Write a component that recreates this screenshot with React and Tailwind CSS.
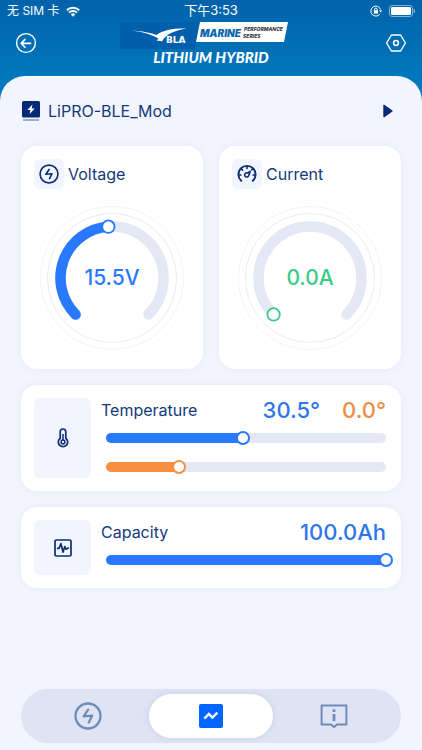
import React, { useState } from "react";

const BoltCircleIcon = ({ className }) => (
  <svg viewBox="0 0 28 28" className={className} fill="none" stroke="currentColor" strokeWidth="2.3" strokeLinecap="round" strokeLinejoin="round">
    <circle cx="14" cy="14" r="12.5" />
    <path d="M14.2 7.6 L9.6 14.4 L18.2 13.6 L14.8 20.4" />
  </svg>
);

const MeterIcon = ({ className }) => (
  <svg viewBox="0 0 20 20" className={className} fill="none" stroke="currentColor" strokeWidth="1.9" strokeLinecap="round" strokeLinejoin="round">
    <path d="M4.2 16.8 A8.6 8.6 0 1 1 15.8 16.8" />
    <path d="M10 2.4 V4.6 M4.2 4.6 L5.6 6.2 M15.8 4.6 L14.6 6 M1.8 11 H4 M16 11 H18.2" strokeWidth="1.6" />
    <path d="M13.2 7.4 L10.6 9 A2.1 2.1 0 1 0 11.8 11.4 Z" strokeWidth="1.6" />
  </svg>
);

const ThermometerIcon = ({ className }) => (
  <svg viewBox="0 0 12 20" className={className} fill="none" stroke="currentColor" strokeWidth="1.7" strokeLinecap="round">
    <path d="M3.2 10.2 V3.8 A2.8 2.8 0 0 1 8.8 3.8 V10.2 A4.7 4.7 0 1 1 3.2 10.2 Z" />
    <path d="M6 6.4 V12" strokeWidth="1.5" />
    <circle cx="6" cy="14" r="1.9" strokeWidth="1.5" />
  </svg>
);

const PulseIcon = ({ className }) => (
  <svg viewBox="0 0 18 18" className={className} fill="none" stroke="currentColor" strokeWidth="1.7" strokeLinecap="round" strokeLinejoin="round">
    <rect x="1" y="1" width="16" height="16" rx="1.2" />
    <path d="M3.6 9.4 H5 L7 4.6 L9 13.2 L10.8 7.6 L12 10.2 L14.4 9" />
  </svg>
);

const BackIcon = ({ className }) => (
  <svg viewBox="0 0 22 22" className={className} fill="none" stroke="currentColor" strokeWidth="1.4" strokeLinecap="round" strokeLinejoin="round">
    <circle cx="11" cy="11" r="9.4" />
    <path d="M15.6 11.4 H6.6 M10 7.4 L6.2 11.4 L10 15.2" strokeWidth="1.6" />
  </svg>
);

const SettingsIcon = ({ className }) => (
  <svg viewBox="0 0 22 22" className={className} fill="none" stroke="currentColor" strokeWidth="1.4" strokeLinejoin="round">
    <path d="M6.4 3 H15.6 L20.4 11 L15.6 19 H6.4 L1.6 11 Z" />
    <circle cx="11" cy="11" r="2.4" strokeWidth="1.5" />
  </svg>
);

const ModuleIcon = ({ className }) => (
  <svg viewBox="0 0 18 20" className={className}>
    <rect width="18" height="16.6" rx="1.6" fill="#062a78" />
    <path d="M10.4 3.4 L5.4 9 H8.4 L7.6 13 L12.8 7.4 H9.8 Z" fill="#fff" />
    <path d="M1 19 H17" stroke="#8496bd" strokeWidth="1.5" />
  </svg>
);

const InfoIcon = ({ className }) => (
  <svg viewBox="0 0 28 24" className={className} fill="none" stroke="currentColor" strokeWidth="2">
    <path d="M1.6 1.4 H26.4 V20.4 H17 L14 23 L11 20.4 H1.6 Z" strokeLinejoin="round" />
    <path d="M14 10 V17" strokeWidth="2.8" />
    <path d="M14 5.4 V8" strokeWidth="2.8" />
  </svg>
);

const TrendIcon = ({ className }) => (
  <svg viewBox="0 0 24 24" className={className}>
    <rect width="24" height="24" rx="2" fill="#0066ff" />
    <path d="M5.4 14.6 L9.8 10 L13.4 13.6 L18.4 8.6" fill="none" stroke="#fff" strokeWidth="2.4" />
  </svg>
);

const BrandLogo = () => (
  <svg viewBox="0 0 182 27" className="block h-[27px] w-[182px]" role="img" aria-label="BLA Marine Performance Series">
    <path d="M0 0 H81 L75 27 H0 Z" fill="#005faa" />
    <path d="M11 8.4 C22 9 31 10.6 36.6 13 C43 8.2 52 6.4 67 6.6 C55 8.4 46 12 42 19.6 C40 18.8 38.4 18.6 36.4 19.2 L38.4 16.8 C33 12.4 22 9.8 11 8.4 Z" fill="#fff" />
    <text x="46" y="21" fontSize="9" fontWeight="700" fontFamily="'DejaVu Sans', sans-serif" fill="#fff">BLA</text>
    <path d="M80 0 H168 L164 20 H76 Z" fill="#fff" />
    <text x="80" y="15" fontSize="10" fontWeight="900" fontStyle="italic" fontFamily="Inter, sans-serif" fill="#0768ae">MARINE</text>
    <text x="124" y="9" fontSize="5" fontWeight="800" fontStyle="italic" fontFamily="Inter, sans-serif" fill="#33383f">PERFORMANCE</text>
    <text x="123" y="16" fontSize="5" fontWeight="800" fontStyle="italic" fontFamily="Inter, sans-serif" fill="#33383f">SERIES</text>
  </svg>
);

const StatusBar = () => (
  <div className="grid h-[22px] grid-cols-3 items-center px-[7px] text-xs text-white">
    <div className="flex items-center gap-1.5">
      <span>无 SIM 卡</span>
      <svg viewBox="0 0 14 11" className="h-[11px] w-3.5" fill="none" stroke="#fff" strokeWidth="2">
        <path d="M0.8 4.2 A8.8 8.8 0 0 1 13.2 4.2" />
        <path d="M3 6.6 A5.7 5.7 0 0 1 11 6.6" />
        <path d="M4.8 8.4 A3.1 3.1 0 0 1 9.2 8.4 L7 10.8 Z" fill="#fff" stroke="none" />
      </svg>
    </div>
    <span className="text-center text-[13px]">下午3:53</span>
    <div className="flex items-center justify-end gap-[7px]">
      <svg viewBox="0 0 12 12" className="size-3" fill="none" stroke="#fff">
        <path d="M10.6 4.4 A5 5 0 1 0 9.8 9.2" />
        <path d="M9 5.2 H12 L10.8 7.4 Z" fill="#fff" stroke="none" />
        <rect x="3.8" y="5.2" width="4.2" height="3.4" fill="#fff" stroke="none" />
        <path d="M4.6 5.4 V4.4 A1.3 1.3 0 0 1 7.2 4.4 V5.4" />
      </svg>
      <svg viewBox="0 0 26 12" className="h-3 w-[26px]">
        <rect x="0.5" y="0.5" width="23" height="11" rx="2.6" fill="none" stroke="#fff" strokeOpacity="0.5" />
        <rect x="2" y="2" width="20" height="8" rx="1.2" fill="#fff" />
        <path d="M24.6 4 A2 2 0 0 1 24.6 8 Z" fill="#fff" fillOpacity="0.5" />
      </svg>
    </div>
  </div>
);

// Point on the dial, 0 = bottom left stop, 1 = bottom right stop
const dialPoint = (ratio) => {
  const angle = ((135 + ratio * 270) * Math.PI) / 180;
  return [78 + 51.5 * Math.cos(angle), 78 + 51.5 * Math.sin(angle)];
};

const dialArc = (ratio) => {
  const [x1, y1] = dialPoint(0);
  const [x2, y2] = dialPoint(ratio);
  return `M${x1} ${y1} A51.5 51.5 0 ${ratio * 270 > 180 ? 1 : 0} 1 ${x2} ${y2}`;
};

const GaugeCard = ({ label, icon, value, ratio, color }) => {
  const [kx, ky] = dialPoint(ratio);
  return (
    <section className="flex flex-col rounded-2xl bg-white p-[13px] shadow-[0_0_8px_rgba(60,100,200,0.07)]">
      <div className="flex items-center gap-1">
        <div className="flex size-[30px] items-center justify-center rounded-md bg-[#f2f5fe] text-[#0c2f73]">
          {icon}
        </div>
        <h2 className="text-base leading-6">{label}</h2>
      </div>
      <div className="mt-[11px] grid place-items-center">
        <svg viewBox="0 0 156 156" className="col-start-1 row-start-1 size-[156px]" fill="none">
          <circle cx="78" cy="78" r="77.5" stroke="#fcfdfe" />
          <circle cx="78" cy="78" r="71.5" stroke="#f4f5fa" />
          <circle cx="78" cy="78" r="64.5" stroke="#e9ecf6" />
          <path d={dialArc(1)} stroke="#e4e8f4" strokeWidth="10.5" strokeLinecap="round" />
          {ratio > 0 && (
            <path d={dialArc(ratio)} stroke={color} strokeWidth="10.5" strokeLinecap="round" />
          )}
          <circle cx={kx} cy={ky} r="6.2" fill="#fff" stroke={color} strokeWidth="1.8" />
        </svg>
        <span className="col-start-1 row-start-1 text-[21px] leading-6 font-medium" style={{ color }}>
          {value}
        </span>
      </div>
    </section>
  );
};

const Slider = ({ label, initial, color }) => {
  const [level, setLevel] = useState(initial);
  return (
    <div className="relative ml-[5px] h-2.5 rounded-full bg-[#e4e8f4]">
      <div className="h-full rounded-full" style={{ width: `${level}%`, background: color }} />
      <input
        type="range"
        min="0"
        max="100"
        aria-label={label}
        value={level}
        onChange={(e) => setLevel(Number(e.target.value))}
        style={{ color }}
        className="absolute -inset-x-[7px] -top-0.5 h-3.5 w-[calc(100%+14px)] cursor-pointer appearance-none bg-transparent [&::-webkit-slider-thumb]:size-3.5 [&::-webkit-slider-thumb]:appearance-none [&::-webkit-slider-thumb]:rounded-full [&::-webkit-slider-thumb]:border-2 [&::-webkit-slider-thumb]:border-current [&::-webkit-slider-thumb]:bg-white"
      />
    </div>
  );
};

const LevelCard = ({ label, icon, values, sliders }) => (
  <section className="flex gap-2.5 rounded-2xl bg-white py-[13px] pr-[15px] pl-[13px] shadow-[0_0_8px_rgba(60,100,200,0.07)]">
    <div className="flex min-h-[55px] w-[57px] shrink-0 items-center justify-center rounded-md bg-[#f2f5fe] text-[#0c2f73]">
      {icon}
    </div>
    <div className="flex-1 pb-1.5">
      <div className="flex h-6 items-center justify-between">
        <h2 className="text-base leading-6">{label}</h2>
        <div className="flex gap-[22px] text-[22px] leading-6 font-medium">
          {values.map((v) => (
            <span key={v.text} style={{ color: v.color }}>
              {v.text}
            </span>
          ))}
        </div>
      </div>
      <div className="mt-[11px] flex flex-col gap-[19px]">
        {sliders.map((s) => (
          <Slider key={s.label} {...s} />
        ))}
      </div>
    </div>
  </section>
);

const tabs = [
  { id: "power", label: "Power", icon: <BoltCircleIcon className="size-7" /> },
  { id: "data", label: "Data", icon: <TrendIcon className="size-6" /> },
  { id: "info", label: "Info", icon: <InfoIcon className="h-6 w-7" /> },
];

const TabBar = () => {
  const [active, setActive] = useState("data");
  return (
    <nav className="mx-[21px] mt-auto mb-[7px] grid grid-cols-3 rounded-full bg-[#dfe4f4] p-[5px]">
      {tabs.map((tab) => (
        <button
          key={tab.id}
          type="button"
          aria-label={tab.label}
          onClick={() => setActive(tab.id)}
          className={`flex h-11 items-center justify-center rounded-full text-[#6f8cb8] ${
            active === tab.id ? "bg-white shadow-[0_0_6px_rgba(60,90,170,0.15)]" : ""
          }`}
        >
          {tab.icon}
        </button>
      ))}
    </nav>
  );
};

export default function App() {
  return (
    <div className="flex min-h-screen flex-col bg-linear-to-b from-[#0062aa] to-[#0078be] to-[80px] font-[Inter,'Noto_Sans_CJK_SC',sans-serif] text-[#143a7b]">
      <StatusBar />
      <header className="flex h-[54px] items-start justify-between px-[15px] text-white">
        <button type="button" aria-label="Back" className="mt-2.5">
          <BackIcon className="size-[22px]" />
        </button>
        <div className="flex flex-col items-center">
          <BrandLogo />
          <h1 className="font-[Lato,sans-serif] text-[15px] leading-4 font-black italic">
            LITHIUM HYBRID
          </h1>
        </div>
        <button type="button" aria-label="Settings" className="mt-2.5">
          <SettingsIcon className="size-[22px]" />
        </button>
      </header>

      <div className="flex flex-1 flex-col rounded-t-[25px] bg-[#f2f5fe]">
        <main className="flex flex-col gap-4 px-[21px]">
          <button type="button" className="-mb-4 flex h-[70px] items-center gap-2 text-left">
            <ModuleIcon className="ml-px h-5 w-[18px]" />
            <span className="flex-1 text-base">LiPRO-BLE_Mod</span>
            <svg viewBox="0 0 10 14" className="mr-2 h-3.5 w-2.5">
              <path d="M1 1.4 L9 7 L1 12.6 Z" fill="#062a78" stroke="#062a78" strokeWidth="1.4" strokeLinejoin="round" />
            </svg>
          </button>

          <div className="grid grid-cols-2 gap-4">
            <GaugeCard
              label="Voltage"
              icon={<BoltCircleIcon className="size-5" />}
              value="15.5V"
              ratio={0.485}
              color="#2979ff"
            />
            <GaugeCard
              label="Current"
              icon={<MeterIcon className="size-5" />}
              value="0.0A"
              ratio={0}
              color="#3acb87"
            />
          </div>

          <LevelCard
            label="Temperature"
            icon={<ThermometerIcon className="h-5 w-3" />}
            values={[
              { text: "30.5°", color: "#2f76ea" },
              { text: "0.0°", color: "#ee8e45" },
            ]}
            sliders={[
              { label: "Temperature 1", initial: 49, color: "#2979ff" },
              { label: "Temperature 2", initial: 26, color: "#f98f43" },
            ]}
          />

          <LevelCard
            label="Capacity"
            icon={<PulseIcon className="size-[18px]" />}
            values={[{ text: "100.0Ah", color: "#2f76ea" }]}
            sliders={[{ label: "Capacity", initial: 100, color: "#2979ff" }]}
          />
        </main>

        <TabBar />
      </div>
    </div>
  );
}
